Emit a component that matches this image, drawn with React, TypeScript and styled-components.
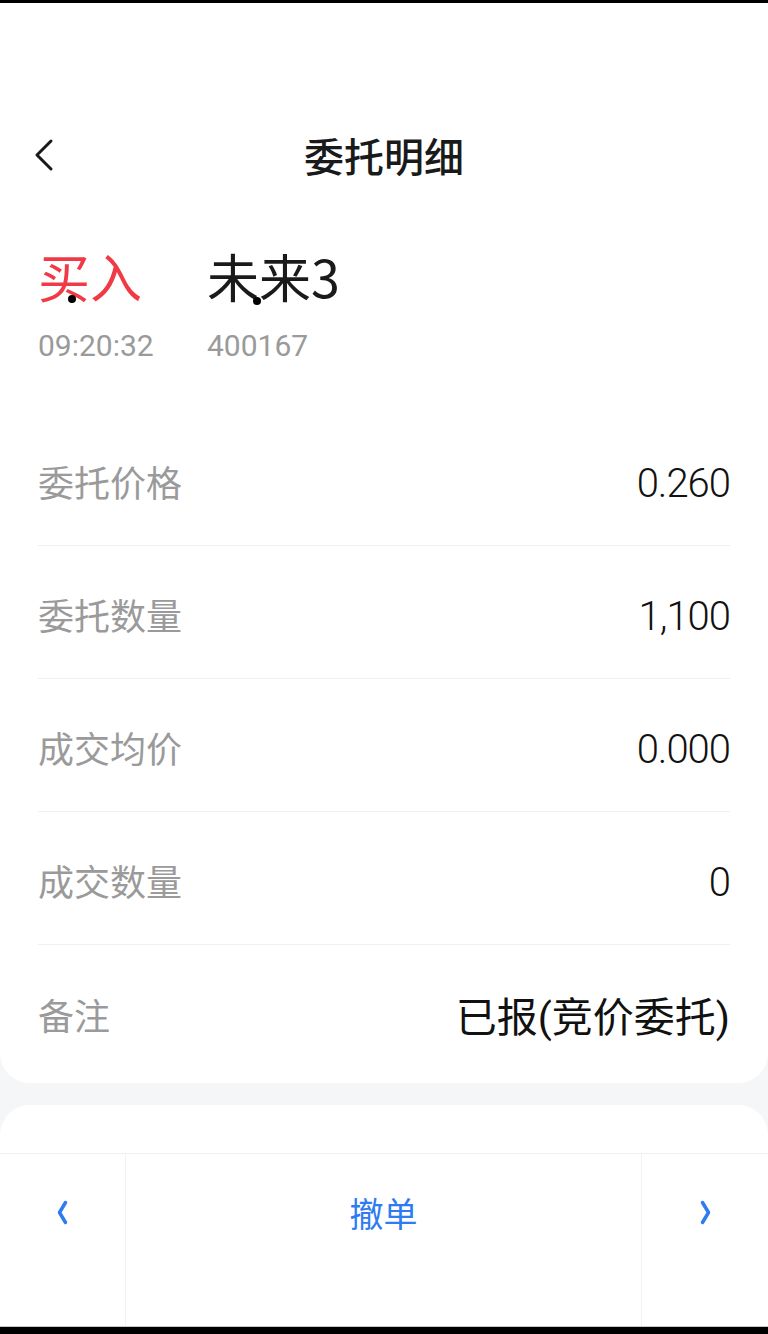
import React from "react";
import styled, { createGlobalStyle } from "styled-components";

const GlobalStyle = createGlobalStyle`
  html, body { margin: 0; padding: 0; background: #f5f6f8; }
  body { font-family: "Noto Sans CJK SC", "Noto Sans", sans-serif; -webkit-font-smoothing: antialiased; }
  * { box-sizing: border-box; }
`;

const Page = styled.div`
  width: 768px;
  min-height: 1334px;
  display: flex;
  flex-direction: column;
  background: #f5f6f8;
`;

const TopEdge = styled.div`
  height: 3px;
  background: #000;
`;

const DetailCard = styled.section`
  background: #fff;
  border-radius: 0 0 30px 30px;
  padding-bottom: 5px;
`;

const StatusSpace = styled.div`
  height: 107px;
`;

const NavBar = styled.header`
  height: 90px;
  display: grid;
  grid-template-columns: 1fr auto 1fr;
  align-items: center;
`;

const BackButton = styled.button`
  justify-self: start;
  margin-left: 34px;
  padding: 0;
  border: 0;
  background: transparent;
  display: flex;
  align-items: center;
  height: 40px;
`;

const Title = styled.h1`
  margin: 0;
  font-size: 40px;
  font-weight: 500;
  color: #1a1a1a;
  line-height: 1;
`;

const Summary = styled.div`
  position: relative;
  display: grid;
  grid-template-columns: 169px auto;
  padding: 46px 38px 49px;
`;

const SummaryCol = styled.div`
  display: flex;
  flex-direction: column;
`;

const BigText = styled.div<{ $color: string }>`
  font-size: 52px;
  line-height: 60px;
  height: 60px;
  color: ${(p) => p.$color};
  font-family: "Noto Sans CJK SC", "Noto Sans", sans-serif;
  white-space: nowrap;
`;

const SubText = styled.div`
  margin-top: 22px;
  font-family: Roboto, "Noto Sans", sans-serif;
  font-size: 30px;
  line-height: 36px;
  color: #9a9a9a;
`;

const Dot = styled.span<{ $left: number; $top: number }>`
  position: absolute;
  left: ${(p) => p.$left}px;
  top: ${(p) => p.$top}px;
  width: 8px;
  height: 8px;
  border-radius: 50%;
  background: #000;
`;

const List = styled.div`
  padding: 0 38px;
`;

const Row = styled.div<{ $last?: boolean }>`
  height: 133px;
  padding-top: 4px;
  display: flex;
  align-items: center;
  justify-content: space-between;
  border-bottom: ${(p) => (p.$last ? "none" : "1px solid #efefef")};
`;

const Label = styled.span`
  font-size: 36px;
  color: #9a9a9a;
`;

const Value = styled.span<{ $cjk?: boolean }>`
  font-family: Roboto, "Noto Sans CJK SC", sans-serif;
  font-size: ${(p) => (p.$cjk ? "41px" : "40px")};
  font-weight: ${(p) => (p.$cjk ? 400 : 300)};
  letter-spacing: ${(p) => (p.$cjk ? "0" : "-1px")};
  color: #111;
  margin-top: ${(p) => (p.$cjk ? "0" : "4px")};
`;

const Gap = styled.div`
  height: 22px;
`;

const ActionCard = styled.section`
  background: #fff;
  border-radius: 30px 30px 0 0;
  padding-top: 48px;
`;

const ActionBar = styled.nav`
  height: 173px;
  border-top: 1px solid #efefef;
  display: grid;
  grid-template-columns: 125px 1fr 126px;
`;

const ActionCell = styled.button<{ $divided?: boolean }>`
  border: 0;
  background: #fff;
  padding: 0 0 56px;
  display: flex;
  align-items: center;
  justify-content: center;
  border-left: ${(p) => (p.$divided ? "1px solid #f2f2f2" : "0")};
  border-right: ${(p) => (p.$divided ? "1px solid #f2f2f2" : "0")};
  font-family: "Noto Sans CJK SC", sans-serif;
  font-size: 34px;
  color: #2f7cf2;
`;

const BottomEdge = styled.div`
  height: 8px;
  border-top: 1px solid #c8c8c8;
  background: #000;
`;

const rows: { label: string; value: string; cjk?: boolean }[] = [
  { label: "委托价格", value: "0.260" },
  { label: "委托数量", value: "1,100" },
  { label: "成交均价", value: "0.000" },
  { label: "成交数量", value: "0" },
  { label: "备注", value: "已报(竞价委托)", cjk: true },
];

const Chevron = ({ dir, color, w, h, sw }: { dir: "left" | "right"; color: string; w: number; h: number; sw: number }) => (
  <svg width={w} height={h} viewBox={`0 0 ${w} ${h}`} fill="none">
    <path
      d={
        dir === "left"
          ? `M${w - sw} ${sw} L${sw} ${h / 2} L${w - sw} ${h - sw}`
          : `M${sw} ${sw} L${w - sw} ${h / 2} L${sw} ${h - sw}`
      }
      stroke={color}
      strokeWidth={sw}
      strokeLinecap="round"
      strokeLinejoin="round"
    />
  </svg>
);

export default function App() {
  return (
    <Page>
      <GlobalStyle />
      <TopEdge />
      <DetailCard>
        <StatusSpace />
        <NavBar>
          <BackButton aria-label="返回">
            <Chevron dir="left" color="#1a1a1a" w={20} h={34} sw={3} />
          </BackButton>
          <Title>委托明细</Title>
          <span />
        </NavBar>
        <Summary>
          <SummaryCol>
            <BigText $color="#f03a46">买入</BigText>
            <SubText>09:20:32</SubText>
          </SummaryCol>
          <SummaryCol>
            <BigText $color="#1a1a1a">未来3</BigText>
            <SubText>400167</SubText>
          </SummaryCol>
          <Dot $left={68} $top={95} />
          <Dot $left={253} $top={97} />
        </Summary>
        <List>
          {rows.map((r, i) => (
            <Row key={r.label} $last={i === rows.length - 1}>
              <Label>{r.label}</Label>
              <Value $cjk={r.cjk}>{r.value}</Value>
            </Row>
          ))}
        </List>
      </DetailCard>
      <Gap />
      <ActionCard>
        <ActionBar>
          <ActionCell aria-label="上一条">
            <Chevron dir="left" color="#2f7cf2" w={13} h={27} sw={3.5} />
          </ActionCell>
          <ActionCell $divided>撤单</ActionCell>
          <ActionCell aria-label="下一条">
            <Chevron dir="right" color="#2f7cf2" w={13} h={27} sw={3.5} />
          </ActionCell>
        </ActionBar>
      </ActionCard>
      <BottomEdge />
    </Page>
  );
}
